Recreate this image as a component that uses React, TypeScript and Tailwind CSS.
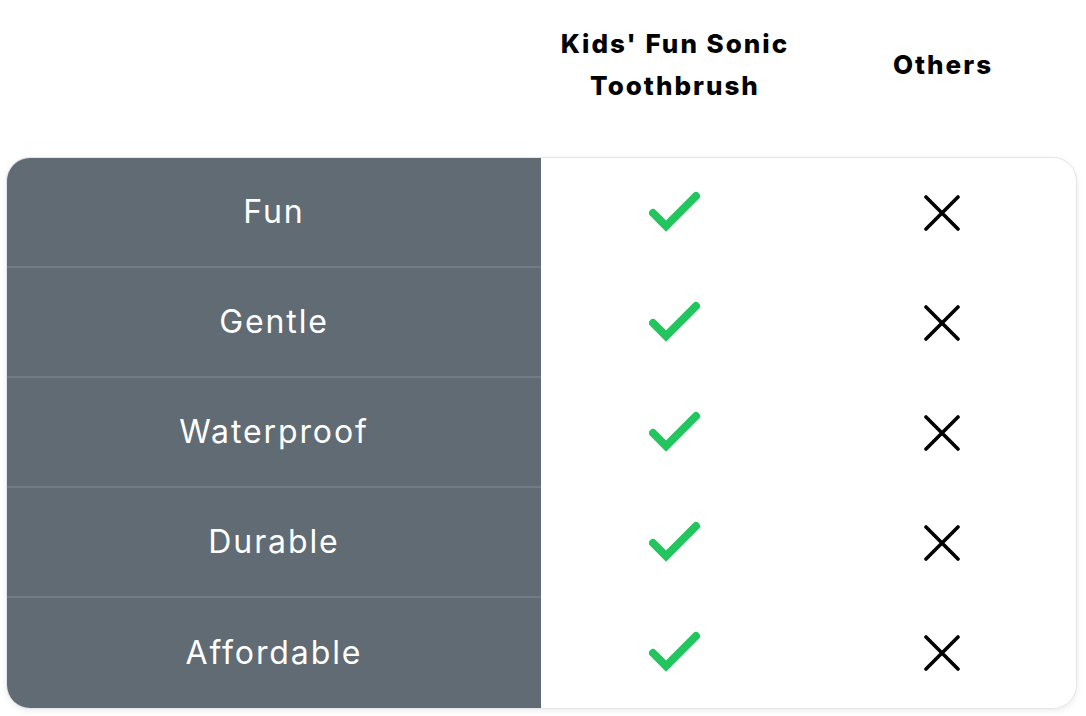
import React from "react";

const rows = ["Fun", "Gentle", "Waterproof", "Durable", "Affordable"];

function Check() {
  return (
    <svg width="52" height="44" viewBox="0 0 52 44" fill="none">
      <polyline
        points="4,22 17,35 47,5"
        stroke="#22c55e"
        strokeWidth="8"
        strokeLinecap="round"
        strokeLinejoin="miter"
      />
    </svg>
  );
}

function Cross() {
  return (
    <svg width="36" height="36" viewBox="0 0 36 36" fill="none">
      <path d="M2 2 L34 34 M34 2 L2 34" stroke="#000" strokeWidth="3.6" strokeLinecap="round" />
    </svg>
  );
}

export default function App() {
  return (
    <div
      className="w-[1086px] h-[716px] bg-white overflow-hidden"
      style={{ fontFamily: "Inter, 'Open Sans', sans-serif" }}
    >
      <div className="ml-[6px] w-[1071px] grid grid-cols-[535px_1fr_1fr] h-[157px]">
        <div />
        <div className="flex items-center justify-center pb-[27px]">
          <div className="text-center text-[26px] leading-[42px] font-extrabold text-black tracking-[2px]">
            Kids' Fun Sonic
            <br />
            Toothbrush
          </div>
        </div>
        <div className="flex items-center justify-center pb-[27px]">
          <div className="text-[26px] leading-[42px] font-extrabold text-black tracking-[2px]">Others</div>
        </div>
      </div>
      <div className="ml-[6px] w-[1071px] rounded-[24px] border border-[#e3e5ea] overflow-hidden bg-white shadow-[0_2px_6px_rgba(0,0,0,0.08)] grid grid-cols-[534px_1fr_1fr]">
        {rows.map((r, i) => (
          <React.Fragment key={r}>
            <div
              className={`bg-[#606b74] text-white flex items-center justify-center text-[32px] tracking-[1.9px] ${
                i < rows.length - 1 ? "h-[110px] border-b-2 border-[#717c85]" : "h-[110px]"
              }`}
            >
              {r}
            </div>
            <div className="flex items-center justify-center h-[110px]">
              <Check />
            </div>
            <div className="flex items-center justify-center h-[110px]">
              <Cross />
            </div>
          </React.Fragment>
        ))}
      </div>
    </div>
  );
}
